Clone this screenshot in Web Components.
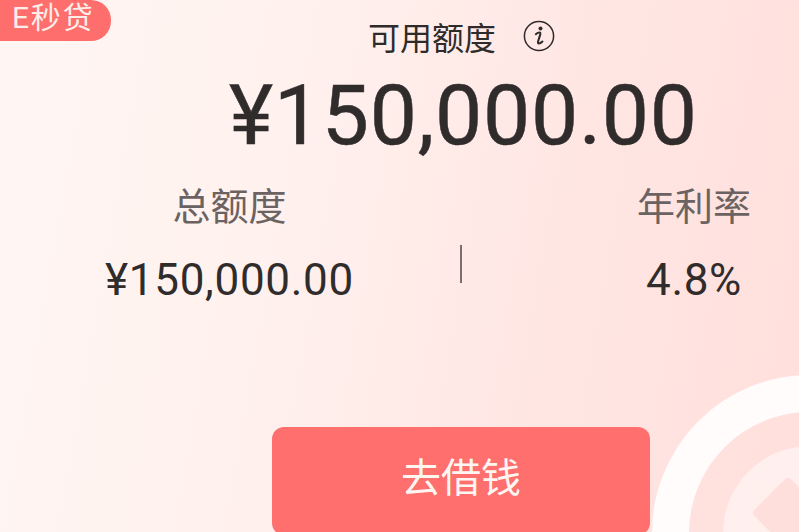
<!DOCTYPE html>
<html lang="zh">
<head>
<meta charset="utf-8">
<title>E秒贷</title>
<style>
	html, body { margin: 0; height: 100%; }
	body { font-family: "Roboto", "Noto Sans CJK SC", sans-serif; overflow: hidden; }
</style>
</head>
<body>
<loan-card>
	<corner-badge slot="badge">E秒贷</corner-badge>
	<corner-seal slot="seal"></corner-seal>
	<credit-head slot="head" label="可用额度" amount="¥150,000.00"></credit-head>
	<stat-item slot="left" label="总额度" value="¥150,000.00"></stat-item>
	<stat-item slot="right" label="年利率" value="4.8%"></stat-item>
	<borrow-button slot="action">去借钱</borrow-button>
</loan-card>

<script>
class LoanCard extends HTMLElement {
	constructor() {
		super()
		this.attachShadow({ mode: 'open' })
		this.shadowRoot.innerHTML = `
      <style>
        :host {
          display: flex;
          flex-direction: column;
          position: relative;
          width: 799px;
          height: 532px;
          overflow: hidden;
          color: #2f2b2b;
          background: linear-gradient(100deg, #fff6f3 0%, #fff1ee 35%, #ffe7e4 65%, #ffdfdc 100%);
        }
        #stats {
          display: grid;
          grid-template-columns: 460px 2px 1fr;
          margin-top: 21px;
        }
        #left { padding-left: 105px; }
        #right { padding-left: 175px; }
        #divider {
          height: 38px;
          margin-top: 61px;
          background: #7d6f6f;
        }
        #action {
          display: flex;
          margin: 124px 0 0 272px;
          position: relative;
        }
      </style>
      <slot name="badge"></slot>
      <slot name="seal"></slot>
      <slot name="head"></slot>
      <section id="stats">
        <div id="left"><slot name="left"></slot></div>
        <div id="divider"></div>
        <div id="right"><slot name="right"></slot></div>
      </section>
      <div id="action"><slot name="action"></slot></div>
    `
	}
}

class CornerBadge extends HTMLElement {
	constructor() {
		super()
		this.attachShadow({ mode: 'open' })
		this.shadowRoot.innerHTML = `
      <style>
        :host {
          position: absolute;
          top: 0;
          left: 0;
          box-sizing: border-box;
          width: 111px;
          height: 41px;
          padding: 0 0 6px 12px;
          display: flex;
          align-items: center;
          background: #fd6e6c;
          border-radius: 0 20px 20px 0;
          color: #fdeeea;
          font-size: 30px;
          letter-spacing: 1.8px;
          line-height: 1;
          white-space: nowrap;
        }
      </style>
      <slot></slot>
    `
	}
}

class CreditHead extends HTMLElement {
	constructor() {
		super()
		this.attachShadow({ mode: 'open' })
		this.shadowRoot.innerHTML = `
      <style>
        :host { display: block; }
        #title {
          display: flex;
          align-items: center;
          height: 40px;
          margin-top: 16px;
          padding-left: 368px;
          font-size: 32px;
          color: #2f2b2b;
        }
        svg { margin-left: 27px; flex: none; }
        #amount {
          margin-top: 13px;
          padding-left: 229px;
          font-size: 84px;
          line-height: 94px;
          letter-spacing: 0.75px;
          -webkit-text-stroke: 0.5px #302c2c;
          color: #302c2c;
          white-space: nowrap;
        }
      </style>
      <div id="title">
        <span id="label"></span>
        <svg width="32" height="32" viewBox="0 0 32 32" fill="none">
          <circle cx="16" cy="16" r="14.6" stroke="#2f2b2b" stroke-width="1.5"/>
          <circle cx="17.5" cy="8.6" r="2" fill="#2f2b2b"/>
          <path d="M12.8 14.2c1.6-1.3 3.4-1.9 4.2-1.5.7.4.4 1.5-.1 3l-1.6 5c-.5 1.6-.4 2.6.4 2.8.9.2 2.4-.7 3.7-2" stroke="#2f2b2b" stroke-width="2.1" stroke-linecap="round"/>
        </svg>
      </div>
      <div id="amount"></div>
    `
	}

	connectedCallback() {
		this.shadowRoot.getElementById('label').textContent = this.getAttribute('label')
		this.shadowRoot.getElementById('amount').textContent = this.getAttribute('amount')
	}
}

class StatItem extends HTMLElement {
	constructor() {
		super()
		this.attachShadow({ mode: 'open' })
		this.shadowRoot.innerHTML = `
      <style>
        :host {
          display: flex;
          flex-direction: column;
          align-items: center;
          width: max-content;
        }
        #label {
          font-size: 38px;
          line-height: 46px;
          color: #6b6361;
        }
        #value {
          margin-top: 27px;
          font-size: 44px;
          line-height: 46px;
          letter-spacing: 0.7px;
          color: #302c2c;
          white-space: nowrap;
        }
      </style>
      <div id="label"></div>
      <div id="value"></div>
    `
	}

	connectedCallback() {
		this.shadowRoot.getElementById('label').textContent = this.getAttribute('label')
		this.shadowRoot.getElementById('value').textContent = this.getAttribute('value')
	}
}

class BorrowButton extends HTMLElement {
	constructor() {
		super()
		this.attachShadow({ mode: 'open' })
		this.shadowRoot.innerHTML = `
      <style>
        :host {
          display: flex;
          align-items: center;
          justify-content: center;
          box-sizing: border-box;
          width: 378px;
          height: 108px;
          padding-bottom: 12px;
          background: #fe6f6d;
          border-radius: 12px;
          color: #fff5f1;
          font-size: 40px;
        }
      </style>
      <slot></slot>
    `
	}
}

class CornerSeal extends HTMLElement {
	constructor() {
		super()
		this.attachShadow({ mode: 'open' })
		this.shadowRoot.innerHTML = `
      <style>
        :host {
          position: absolute;
          left: 640px;
          top: 360px;
          width: 159px;
          height: 172px;
        }
        svg { display: block; }
      </style>
      <svg width="159" height="172" viewBox="640 360 159 172" fill="none">
        <circle cx="810" cy="533" r="139.5" stroke="#fff" stroke-opacity=".88" stroke-width="37"/>
        <circle cx="810" cy="533" r="87" fill="#fff" fill-opacity=".5"/>
        <rect x="762" y="487" width="52" height="52" rx="4" transform="rotate(45 788 513)" fill="#ffdfdc"/>
      </svg>
    `
	}
}

customElements.define('loan-card', LoanCard)
customElements.define('corner-badge', CornerBadge)
customElements.define('credit-head', CreditHead)
customElements.define('stat-item', StatItem)
customElements.define('borrow-button', BorrowButton)
customElements.define('corner-seal', CornerSeal)
</script>
</body>
</html>
